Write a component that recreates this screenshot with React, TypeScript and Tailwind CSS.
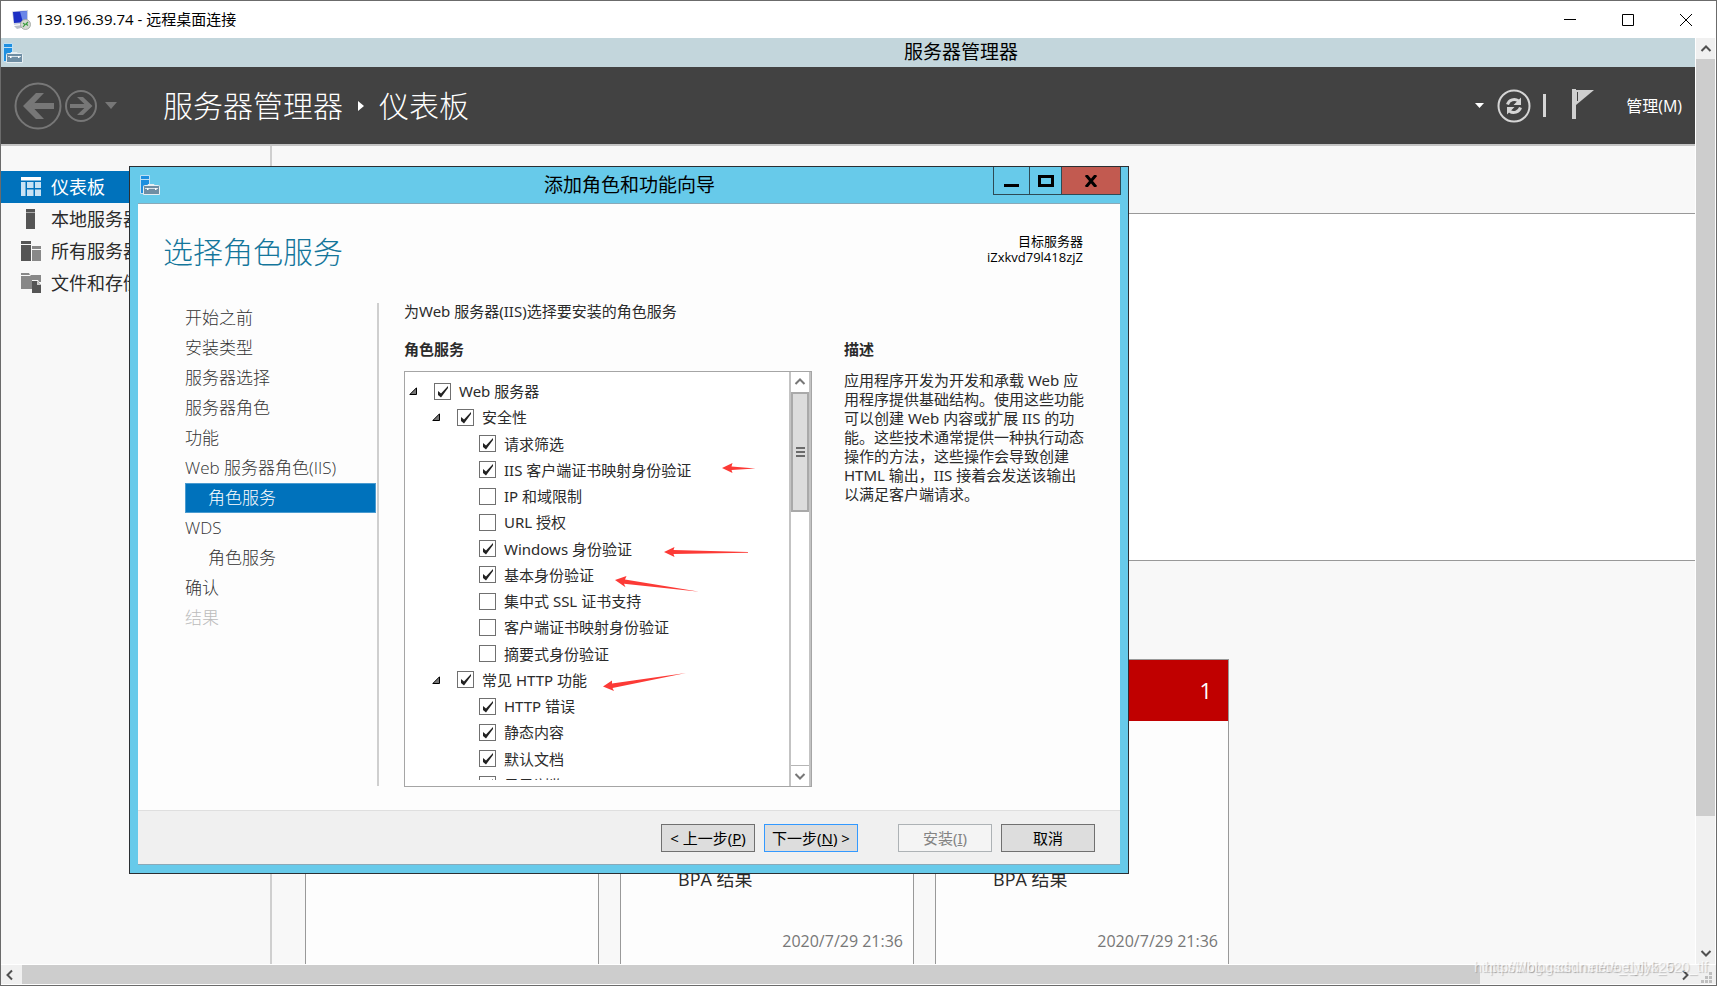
import { ReactNode } from "react";

type TreeItem = { label: string; level: 0 | 1 | 2; checked?: boolean; open?: boolean };

const TREE: TreeItem[] = [
  { label: "Web 服务器", level: 0, checked: true, open: true },
  { label: "安全性", level: 1, checked: true, open: true },
  { label: "请求筛选", level: 2, checked: true },
  { label: "IIS 客户端证书映射身份验证", level: 2, checked: true },
  { label: "IP 和域限制", level: 2 },
  { label: "URL 授权", level: 2 },
  { label: "Windows 身份验证", level: 2, checked: true },
  { label: "基本身份验证", level: 2, checked: true },
  { label: "集中式 SSL 证书支持", level: 2 },
  { label: "客户端证书映射身份验证", level: 2 },
  { label: "摘要式身份验证", level: 2 },
  { label: "常见 HTTP 功能", level: 1, checked: true, open: true },
  { label: "HTTP 错误", level: 2, checked: true },
  { label: "静态内容", level: 2, checked: true },
  { label: "默认文档", level: 2, checked: true },
  { label: "目录浏览", level: 2, checked: true },
];

const LEVEL_PADDING = ["pl-1", "pl-[27px]", "pl-[49px]"];

const STEPS = [
  { label: "开始之前" },
  { label: "安装类型" },
  { label: "服务器选择" },
  { label: "服务器角色" },
  { label: "功能" },
  { label: "Web 服务器角色(IIS)" },
  { label: "角色服务", sub: true, current: true },
  { label: "WDS" },
  { label: "角色服务", sub: true },
  { label: "确认" },
  { label: "结果", disabled: true },
];

function RemoteIcon() {
  return (
    <svg width="20" height="20" viewBox="0 0 20 20" aria-hidden="true">
      <path d="M1 1.5 17 0v13L3 15z" fill="#c9cfe0" />
      <path d="M2 2 16 1v11L3 13z" fill="#1c2fc4" />
      <path d="M9 1.5 16 1v11l-4 .6z" fill="#6a86e8" />
      <path d="M3 16l9-1 2 2-8 2z" fill="#b9bfc9" />
      <circle cx="14.500" cy="14.500" r="5" fill="#d5d9d3" stroke="#9a9f9a" strokeWidth="0.800" />
      <path d="M12 13l2 1.500-2 2.500M17 12l-2 2 2 1.500" fill="none" stroke="#3a9c3e" strokeWidth="1.200" />
    </svg>
  );
}

function ServerIcon() {
  return (
    <svg width="20" height="20" viewBox="0 0 20 20" className="shrink-0" aria-hidden="true">
      <path d="M.5.5h9v18h-9z" fill="#1e8fe0" stroke="#bfe0f4" />
      <path d="M1 4.500h8" stroke="#bfe0f4" />
      <path d="M8 10.500V9.500h6v1" fill="none" stroke="#e6eef2" />
      <path d="M3.500 11.500q0-1 1-1h14q1 0 1 1v8h-16z" fill="#6f8ea4" stroke="#e6eef2" />
      <path d="M5 13.500h13" stroke="#d7e2e9" />
      <path d="M7 13h1.500v2H7zM15 13h1.500v2H15z" fill="#fff" />
    </svg>
  );
}

function DashboardIcon() {
  return (
    <svg width="20" height="20" viewBox="0 0 20 20" aria-hidden="true">
      <path d="M0 0h20v3.500H0z" fill="#fff" />
      <path d="M0 5h4.500v14H0zM6 5h6.500v6H6zM14 5h6v6h-6zM6 12.500h6.500V19H6zM14 12.500h6V19h-6z" fill="#c9e2f3" />
    </svg>
  );
}

function LocalServerIcon() {
  return (
    <svg width="20" height="20" viewBox="0 0 20 20" aria-hidden="true">
      <path d="M5 0h9v3H5z" fill="#555" />
      <path d="M5 3h9v1H5z" fill="#aaa" />
      <path d="M5 4h9v16H5z" fill="#555" />
    </svg>
  );
}

function AllServersIcon() {
  return (
    <svg width="20" height="20" viewBox="0 0 20 20" aria-hidden="true">
      <path d="M0 0h10v3H0zM0 4h10v16H0z" fill="#555" />
      <path d="M11 5h9v3h-9zM11 9h9v11h-9z" fill="#888" />
    </svg>
  );
}

function StorageIcon() {
  return (
    <svg width="20" height="20" viewBox="0 0 20 20" aria-hidden="true">
      <path d="M0 0h8l1 2H0zM0 3h9l1-1h10v7h-2l-1-2h-6v9H0z" fill="#888" />
      <path d="M11 8h5l4 4v8h-9z" fill="#555" />
      <path d="M16 8v4h4z" fill="#ccc" />
    </svg>
  );
}

function Chevron({ className }: { className?: string }) {
  return (
    <svg width="12" height="12" viewBox="0 0 12 12" className={className} aria-hidden="true">
      <path d="M1.500 8 6 3.500 10.500 8" fill="none" stroke="currentColor" strokeWidth="2" />
    </svg>
  );
}

const SIDEBAR: { label: string; icon: ReactNode; active?: boolean }[] = [
  { label: "仪表板", icon: <DashboardIcon />, active: true },
  { label: "本地服务器", icon: <LocalServerIcon /> },
  { label: "所有服务器", icon: <AllServersIcon /> },
  { label: "文件和存储服务", icon: <StorageIcon /> },
];

function RemoteTitleBar() {
  return (
    <header className="flex h-[37px] shrink-0 items-center justify-between bg-white pl-[10px] pr-px text-black">
      <div className="flex items-center gap-[5px]">
        <RemoteIcon />
        <span className="text-[15px]">139.196.39.74 - 远程桌面连接</span>
      </div>
      <div className="flex h-full">
        <button aria-label="最小化" className="flex w-[58px] items-center justify-center">
          <svg width="12" height="12" viewBox="0 0 12 12" stroke="#000">
            <path d="M0 5.500h12" />
          </svg>
        </button>
        <button aria-label="最大化" className="flex w-[58px] items-center justify-center">
          <svg width="12" height="12" viewBox="0 0 12 12" stroke="#000" fill="none">
            <path d="M.5.5h11v11H.5z" />
          </svg>
        </button>
        <button aria-label="关闭" className="flex w-[58px] items-center justify-center">
          <svg width="12" height="12" viewBox="0 0 12 12" stroke="#000">
            <path d="M0 0l12 12M12 0 0 12" />
          </svg>
        </button>
      </div>
    </header>
  );
}

function ManagerHeader() {
  return (
    <div className="flex h-[77px] shrink-0 items-center justify-between bg-[#424242] pl-[13px] pr-[13px] text-white">
      <div className="flex items-center">
        <button aria-label="后退" disabled>
          <svg width="48" height="48" viewBox="0 0 48 48" fill="none" stroke="#777">
            <circle cx="24" cy="24" r="22.500" strokeWidth="2" />
            <path d="M40 24H13" strokeWidth="6" />
            <path d="M22 11h8L17.500 24 30 37h-8L9 24z" fill="#777" stroke="none" />
          </svg>
        </button>
        <button aria-label="前进" disabled className="ml-[2px]">
          <svg width="34" height="34" viewBox="0 0 34 34" fill="none" stroke="#777">
            <circle cx="17" cy="17" r="15" strokeWidth="2" />
            <path d="M6 17h19" strokeWidth="4" />
            <path d="M19 8h-6l9.500 9-9.500 9h6l9.500-9z" fill="#777" stroke="none" />
          </svg>
        </button>
        <svg width="12" height="7" viewBox="0 0 12 7" className="ml-[7px]" aria-hidden="true">
          <path d="M0 0h12L6 7z" fill="#777" />
        </svg>
        <h1 className="ml-[46px] flex items-center text-[30px] font-light leading-10">
          服务器管理器
          <svg width="6" height="10" viewBox="0 0 6 10" className="mx-[15px]" aria-hidden="true">
            <path d="M0 0l6 5-6 5z" fill="#fff" />
          </svg>
          仪表板
        </h1>
      </div>
      <div className="flex items-center">
        <svg width="10" height="5" viewBox="0 0 10 5" aria-hidden="true">
          <path d="M0 0h9L4.500 5z" fill="#fff" />
        </svg>
        <button aria-label="刷新" className="ml-3">
          <svg width="34" height="34" viewBox="0 0 34 34" fill="none" stroke="#d5d5d5">
            <circle cx="17" cy="17" r="15.500" strokeWidth="2" />
            <path d="M10.500 15.500a7 7 0 0 1 11-3.500M23.500 18.500a7 7 0 0 1-11 3.500" strokeWidth="3" />
            <path d="M24 8.500v7.500h-7.500zM10 25.500V18h7.500z" fill="#d5d5d5" stroke="none" />
          </svg>
        </button>
        <span className="ml-3 h-[23px] w-[3px] bg-[#d5d5d5]" />
        <button aria-label="通知" className="ml-[26px] pb-1">
          <svg width="22" height="30" viewBox="0 0 22 30" fill="#cfcfcf">
            <path d="M0 0h4v30H0z" />
            <path d="M4 1h18L4 16z" />
            <path d="M5 3h1v9H5z" fill="#424242" />
          </svg>
        </button>
        <button className="ml-8 text-[16px]">管理(M)</button>
      </div>
    </div>
  );
}

function Sidebar() {
  return (
    <nav className="w-[271px] shrink-0 border-r-2 border-[#cfcfcf] pt-[25px]">
      {SIDEBAR.map((item) => (
        <a
          key={item.label}
          href="#"
          className={
            item.active
              ? "flex h-8 items-center gap-[10px] bg-[#0072bc] pl-5 text-[18px] text-white"
              : "flex h-8 items-center gap-[10px] pl-5 text-[18px] text-[#2b2b2b]"
          }
        >
          {item.icon}
          {item.label}
        </a>
      ))}
    </nav>
  );
}

function RoleCard({ count, result }: { count?: number; result?: boolean }) {
  return (
    <section className="flex h-[340px] w-[294px] shrink-0 flex-col border border-[#999] bg-[#fdfdfd]">
      {count !== undefined && (
        <div className="flex h-[61px] items-center justify-end bg-[#c00000] pr-4 text-[22px] text-white">{count}</div>
      )}
      {result && (
        <div className="mt-auto pb-[45px]">
          <p className="pl-[57px] text-[18px] leading-6 text-[#2b2b2b]">BPA 结果</p>
          <p className="mt-[38px] pr-[10px] text-right text-[16px] leading-6 text-[#777]">2020/7/29 21:36</p>
        </div>
      )}
    </section>
  );
}

function Dashboard() {
  return (
    <main className="min-w-0 flex-1 overflow-hidden pl-[33px] pt-[67px]">
      <div className="h-[348px] border-y border-l border-[#999] bg-white" />
      <div className="mt-[98px] flex gap-[21px]">
        <RoleCard />
        <RoleCard result />
        <RoleCard count={1} result />
      </div>
    </main>
  );
}

function TreeRow({ item }: { item: TreeItem }) {
  return (
    <li className={`flex flex-1 items-center ${LEVEL_PADDING[item.level]}`}>
      <span className="w-[25px] shrink-0">
        {item.open && (
          <svg width="8" height="8" viewBox="0 0 8 8" aria-hidden="true">
            <path d="M7.500.8v6.700H.8z" fill="#777" stroke="#000" />
          </svg>
        )}
      </span>
      <label className="flex items-center gap-2 whitespace-nowrap">
        <span className="grid">
          <input
            type="checkbox"
            defaultChecked={item.checked}
            className="peer col-start-1 row-start-1 size-[17px] appearance-none border border-[#707070] bg-white"
          />
          <svg
            width="17"
            height="17"
            viewBox="0 0 17 17"
            className="pointer-events-none col-start-1 row-start-1 opacity-0 peer-checked:opacity-100"
          >
            <path d="M4 8v4l3 2.500L14 5V3L7 10.500z" fill="#222" />
          </svg>
        </span>
        {item.label}
      </label>
    </li>
  );
}

function RoleTree() {
  return (
    <div className="relative mt-3 flex h-[416px] border border-[#a5a5a5] bg-white">
      <div className="min-w-0 flex-1 py-[6px]">
        <div className="h-full overflow-hidden">
          <ul className="flex h-[420px] flex-col">
            {TREE.map((item) => (
              <TreeRow key={item.label} item={item} />
            ))}
          </ul>
        </div>
      </div>
      <div className="flex w-[22px] flex-col border-x-2 border-[#c3c3c3] bg-white text-[#777]">
        <button aria-label="向上滚动" className="flex h-5 items-center justify-center">
          <Chevron />
        </button>
        <div className="flex h-[120px] flex-col items-center justify-center gap-[2px] border-2 border-[#a9a9a9] bg-[#dcdcdc]">
          <span className="h-[2px] w-[9px] bg-[#6b6b6b]" />
          <span className="h-[2px] w-[9px] bg-[#6b6b6b]" />
          <span className="h-[2px] w-[9px] bg-[#6b6b6b]" />
        </div>
        <button aria-label="向下滚动" className="mt-auto flex h-[21px] items-center justify-center border-t border-[#b5b5b5]">
          <Chevron className="rotate-180" />
        </button>
      </div>
      {/* red marker arrows drawn over the list */}
      <svg
        width="384"
        height="400"
        viewBox="405 372 384 400"
        className="pointer-events-none absolute left-0 top-0"
        fill="#fc3a36"
        aria-hidden="true"
      >
        <path d="M722 468l10.500-5-1 3.500 24 2-24 1.500 1 3z" />
        <path d="M664 552l10.500-5-1 3 74.500 2v.8l-74.500 1.200 1 3z" />
        <path d="M615 580l11.500-4-1.500 3.500 74.500 12.300-75.500-8 1.500 3.500z" />
        <path d="M603 686.500l9-6 0 3 74-10.500-73.500 15 1.500 3z" />
      </svg>
    </div>
  );
}

function WizardButton({ children, primary, disabled }: { children: ReactNode; primary?: boolean; disabled?: boolean }) {
  let look = "border-[#707070] bg-[#dddddd] text-black";
  if (primary) look = "border-[#3399ff] bg-[#dddddd] text-black";
  if (disabled) look = "border-[#adb2b5] bg-[#f4f4f4] text-[#838383]";
  return (
    <button disabled={disabled} className={`h-7 w-[94px] whitespace-pre border text-[15px] leading-5 ${look}`}>
      {children}
    </button>
  );
}

function Wizard() {
  return (
    <div
      role="dialog"
      aria-label="添加角色和功能向导"
      className="absolute left-[128px] top-[128px] flex h-[708px] w-[1000px] flex-col border border-[#2b2f33] bg-[#67caea] px-2 pb-2"
    >
      <div className="flex h-9 shrink-0">
        <div className="flex w-[128px] items-center pl-[2px]">
          <ServerIcon />
        </div>
        <h2 className="flex-1 pt-1 text-center text-[19px] leading-7 text-black">添加角色和功能向导</h2>
        <div className="-mr-px flex h-7 border-x border-b border-[#2d4a55]">
          <button aria-label="最小化" className="flex w-[35px] items-end justify-center pb-[7px]">
            <span className="h-[3px] w-[15px] bg-black" />
          </button>
          <button aria-label="最大化" className="flex w-[33px] items-center justify-center border-x border-[#2d4a55]">
            <span className="h-3 w-4 border-[3px] border-black" />
          </button>
          <button aria-label="关闭" className="flex w-[58px] items-center justify-center bg-[#c25a50]">
            <svg width="14" height="12" viewBox="0 0 14 12">
              <path d="M2 0l10 12M12 0 2 12" stroke="#000" strokeWidth="3" />
            </svg>
          </button>
        </div>
      </div>

      <div className="flex min-h-0 flex-1 flex-col border-y border-[#8aa9b8] bg-[#fdfdfd] text-[#2b2b2b]">
        <div className="flex justify-between pl-[25px] pr-[37px] pt-[28px]">
          <h3 className="text-[30px] font-light leading-10 text-[#14769b]">选择角色服务</h3>
          <p className="pt-px text-right text-[13px] leading-4 text-black">
            目标服务器
            <br />
            iZxkvd79l418zjZ
          </p>
        </div>

        <div className="mt-[31px] flex flex-1 pl-[47px] font-['Noto_Sans','Noto_Sans_CJK_SC',sans-serif]">
          <ol className="mb-[24px] w-[194px] border-r-2 border-[#cfcfcf] font-['Open_Sans','Noto_Sans_CJK_SC',sans-serif] text-[17px] font-light text-[#333]">
            {STEPS.map((step, i) => (
              <li
                key={i}
                className={
                  step.current
                    ? "mr-px flex h-[30px] items-center border border-[#4a9bd0] bg-[#0072bc] pl-[22px] text-white"
                    : step.sub
                      ? "flex h-[30px] items-center pl-[23px]"
                      : step.disabled
                        ? "flex h-[30px] items-center text-[#bbb]"
                        : "flex h-[30px] items-center"
                }
              >
                {step.label}
              </li>
            ))}
          </ol>
          <div className="ml-[25px] w-[408px] text-[15px] leading-5">
            <p className="leading-4">为Web 服务器(IIS)选择要安装的角色服务</p>
            <h4 className="mt-5 font-bold">角色服务</h4>
            <RoleTree />
          </div>
          <div className="ml-8 w-[242px] pt-9 text-[15px]">
            <h4 className="font-bold leading-5">描述</h4>
            <p className="mt-3 leading-[19px]">
              应用程序开发为开发和承载 Web 应用程序提供基础结构。使用这些功能可以创建 Web 内容或扩展 IIS
              的功能。这些技术通常提供一种执行动态操作的方法，这些操作会导致创建 HTML 输出，IIS
              接着会发送该输出以满足客户端请求。
            </p>
          </div>
        </div>

        <div className="flex h-[54px] shrink-0 items-center justify-end gap-[9px] border-t border-[#dfdfdf] bg-[#f0f0f0] pr-[25px] font-['Noto_Sans','Noto_Sans_CJK_SC',sans-serif]">
          <WizardButton>
            &lt; 上一步(<u>P</u>)
          </WizardButton>
          <WizardButton primary>
            下一步(<u>N</u>) &gt;
          </WizardButton>
          <span className="w-[22px]" />
          <WizardButton disabled>
            安装(<u>I</u>)
          </WizardButton>
          <WizardButton>取消</WizardButton>
        </div>
      </div>
    </div>
  );
}

export default function App() {
  return (
    <div className="relative flex h-screen flex-col overflow-hidden border border-[#6b6b6b] bg-[#f0f0f0] font-['Open_Sans','Noto_Sans_CJK_SC',sans-serif]">
      <RemoteTitleBar />

      <div className="flex min-h-0 flex-1">
        <div className="relative flex min-w-0 flex-1 flex-col overflow-hidden bg-[#f8f8f8]">
          <div className="flex h-[29px] shrink-0 items-center bg-[#c3d6dc] pl-[2px]">
            <ServerIcon />
            {/* the remote desktop is wider than the view, so its title is centred past the edge */}
            <span className="w-[1876px] shrink-0 text-center text-[19px] text-black">服务器管理器</span>
          </div>
          <ManagerHeader />
          <div className="flex min-h-0 flex-1 border-t-2 border-[#c4c4c4]">
            <Sidebar />
            <Dashboard />
          </div>
          <Wizard />
        </div>
        <div className="flex w-[21px] shrink-0 flex-col border-x border-white text-[#505050]">
          <button aria-label="向上滚动" className="flex h-[21px] items-center justify-center">
            <Chevron />
          </button>
          <div className="h-[757px] bg-[#cdcdcd]" />
          <button aria-label="向下滚动" className="mt-auto flex h-[22px] items-center justify-center">
            <Chevron className="rotate-180" />
          </button>
        </div>
      </div>

      <div className="flex h-[21px] shrink-0 border-y border-white text-[#505050]">
        <button aria-label="向左滚动" className="flex w-[21px] items-center justify-center pr-1">
          <Chevron className="-rotate-90" />
        </button>
        <div className="flex-1 bg-[#cdcdcd]" />
        <div className="flex w-[236px] justify-end">
          <button aria-label="向右滚动" className="flex w-[21px] items-center justify-center">
            <Chevron className="rotate-90" />
          </button>
          <svg width="21" height="19" viewBox="0 0 21 19" fill="#bfbfbf" aria-hidden="true">
            <path d="M14 7h3v3h-3zM10 11h3v3h-3zM14 11h3v3h-3zM6 15h3v3H6zM10 15h3v3h-3zM14 15h3v3h-3z" />
          </svg>
        </div>
      </div>

      <div className="pointer-events-none absolute bottom-2 right-2 grid w-[234px] font-['Liberation_Sans'] text-[14px] leading-5 text-white/70 [text-shadow:1px_1px_1px_rgba(0,0,0,0.2)]">
        <span className="col-start-1 row-start-1">https://blog.csdn.net/oe_tlyjk520</span>
        <span className="col-start-1 row-start-1 text-right">https://blog.csdn.net/oe_tlyk_520_tlf</span>
      </div>
    </div>
  );
}
